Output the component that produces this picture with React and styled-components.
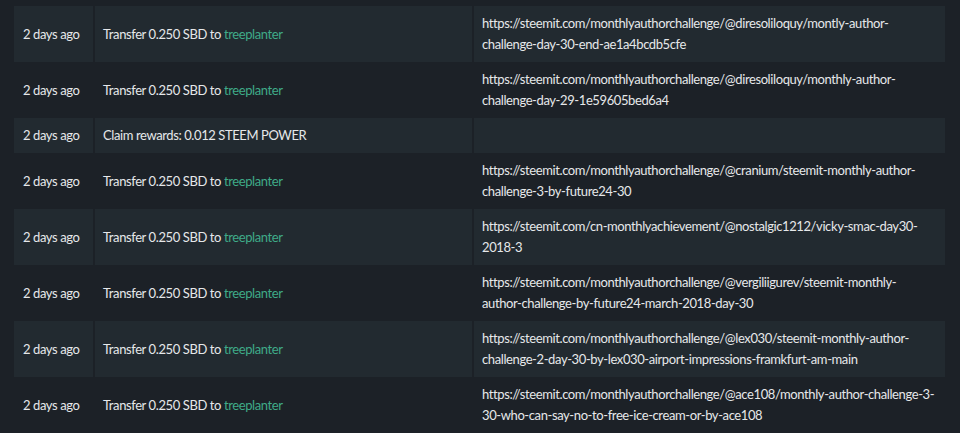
import React from "react";
import styled, { createGlobalStyle } from "styled-components";

const GlobalStyle = createGlobalStyle`
    html, body {
        margin: 0;
        padding: 0;
        background: #1c2127;
    }
    body {
        font-family: Lato, "Open Sans", sans-serif;
    }
`

const transfers = [
    { memo: "https://steemit.com/monthlyauthorchallenge/@diresoliloquy/montly-author-challenge-day-30-end-ae1a4bcdb5cfe" },
    { memo: "https://steemit.com/monthlyauthorchallenge/@diresoliloquy/monthly-author-challenge-day-29-1e59605bed6a4" },
    { claim: "Claim rewards: 0.012 STEEM POWER" },
    { memo: "https://steemit.com/monthlyauthorchallenge/@cranium/steemit-monthly-author-challenge-3-by-future24-30" },
    { memo: "https://steemit.com/cn-monthlyachievement/@nostalgic1212/vicky-smac-day30-2018-3" },
    { memo: "https://steemit.com/monthlyauthorchallenge/@vergiliigurev/steemit-monthly-author-challenge-by-future24-march-2018-day-30" },
    { memo: "https://steemit.com/monthlyauthorchallenge/@lex030/steemit-monthly-author-challenge-2-day-30-by-lex030-airport-impressions-framkfurt-am-main" },
    { memo: "https://steemit.com/monthlyauthorchallenge/@ace108/monthly-author-challenge-3-30-who-can-say-no-to-free-ice-cream-or-by-ace108" },
]

const App = () => {
    return (
        <Page>
            <GlobalStyle />
            <History>
                <tbody>
                    {transfers.map((item, i) => (
                        <Row key={i} $striped={i % 2 === 0}>
                            <TimeCell>2 days ago</TimeCell>
                            <OpCell>
                                {item.claim ? item.claim : (
                                    <>Transfer 0.250 SBD to <Account href="#">treeplanter</Account></>
                                )}
                            </OpCell>
                            <MemoCell>{item.memo}</MemoCell>
                        </Row>
                    ))}
                </tbody>
            </History>
        </Page>
    )
}

export default App;

const Page = styled.div`
    padding: 6px 15px 0 14px;
`

const History = styled.table`
    border-collapse: separate;
    border-spacing: 2px 0;
    margin: 0 -2px;
    width: calc(100% + 4px);
    color: #e6e8ea;
    font-size: 13px;
    line-height: 21px;
    letter-spacing: -0.4px;
`

const Row = styled.tr`
    td {
        background: ${props => props.$striped ? '#222a30' : 'transparent'};
        padding: 7px 8px;
        vertical-align: middle;
    }
`

const TimeCell = styled.td`
    width: 62px;
    white-space: nowrap;
    padding-left: 9px !important;
`

const OpCell = styled.td`
    width: 361px;
`

const MemoCell = styled.td`
    overflow-wrap: break-word;
    padding-right: 10px !important;
`

const Account = styled.a`
    color: #3fab88;
    text-decoration: none;
`
